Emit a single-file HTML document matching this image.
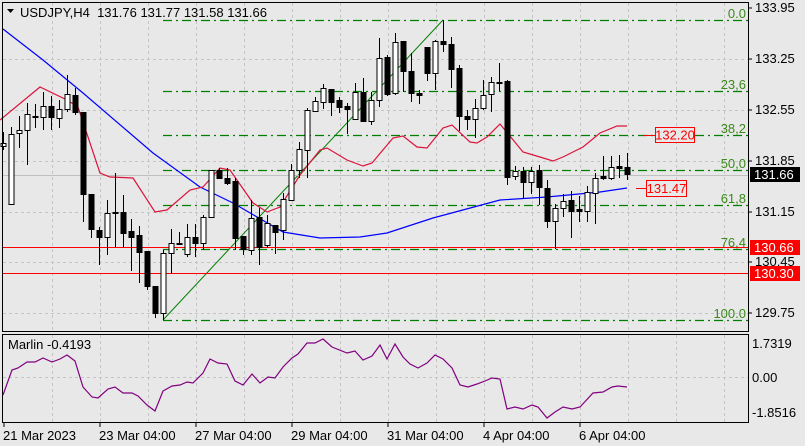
<!DOCTYPE html>
<html><head><meta charset="utf-8"><style>
html,body{margin:0;padding:0;background:#e8e8e8;}
svg{display:block;font-family:"Liberation Sans","DejaVu Sans",sans-serif;}
</style></head><body>
<svg id="s" width="805" height="446" viewBox="0 0 805 446" xmlns="http://www.w3.org/2000/svg">
<rect width="805" height="446" fill="#e8e8e8"/>
<g id="grid" stroke="#c4c4c4" stroke-dasharray="3 3" stroke-width="1"></g>
<g stroke="#007f00" stroke-dasharray="9 4 2 4" stroke-width="1.3" fill="none">
<line x1="163" y1="20.5" x2="748" y2="20.5"/>
<line x1="163" y1="91.5" x2="748" y2="91.5"/>
<line x1="163" y1="135.5" x2="748" y2="135.5"/>
<line x1="163" y1="170.5" x2="748" y2="170.5"/>
<line x1="163" y1="205.5" x2="748" y2="205.5"/>
<line x1="163" y1="249.5" x2="748" y2="249.5"/>
<line x1="163" y1="320.5" x2="748" y2="320.5"/>
</g>
<line x1="163" y1="320" x2="443" y2="20" stroke="#008000" stroke-width="1"/>
<g fill="#3a8a1a" font-size="13" text-anchor="end">
<text x="746" y="18">0.0</text>
<text x="746" y="89">23,6</text>
<text x="746" y="133">38,2</text>
<text x="746" y="168">50,0</text>
<text x="746" y="203">61,8</text>
<text x="746" y="247">76,4</text>
<text x="746" y="318">100.0</text>
</g>
<line x1="2" y1="175.5" x2="748" y2="175.5" stroke="#c0c0c0"/>
<line x1="2" y1="247.5" x2="748" y2="247.5" stroke="#ff0000"/>
<line x1="2" y1="273.5" x2="748" y2="273.5" stroke="#ff0000"/>
<polyline fill="none" stroke="#0000ff" stroke-width="1.2" points="3,29 43,60 83,93 153,153 200,187 233,203 283,232 320,238 360,237 387,233 433,218 500,200 547,197 600,192 627,188"/>
<polyline fill="none" stroke="#dc143c" stroke-width="1.2" points="0,120 40,87 67,100 78,107 100,173 110,177 133,178 155,212 167,210 190,190 203,187 220,168 230,170 253,203 267,212 280,207 300,175 320,150 327,148 347,160 363,166 372,163 393,138 403,136 417,147 427,148 443,128 452,125 470,142 477,143 487,137 500,124 523,152 540,157 553,161 563,157 583,147 600,133 617,126 627,126"/>
<g id="candles"></g>
<line x1="643" y1="135.5" x2="655" y2="135.5" stroke="#ff0000"/>
<rect x="655.5" y="127.5" width="39" height="15" fill="#e8e8e8" stroke="#ff0000"/>
<text x="675" y="139.5" fill="#ff0000" font-size="13" text-anchor="middle">132.20</text>
<line x1="636" y1="188.5" x2="646" y2="188.5" stroke="#ff0000"/>
<rect x="646.5" y="180.5" width="40" height="16" fill="#e8e8e8" stroke="#ff0000"/>
<text x="666.5" y="193" fill="#ff0000" font-size="13" text-anchor="middle">131.47</text>
<rect x="2.5" y="2.5" width="746" height="329" fill="none" stroke="#000"/>
<rect x="2.5" y="334.5" width="746" height="88" fill="none" stroke="#000"/>
<path d="M7,9 L14,9 L10.5,13 Z" fill="#000"/>
<text x="20" y="17" font-size="13" fill="#000">USDJPY,H4&#160; 131.76 131.77 131.58 131.66</text>
<g font-size="13" fill="#000">
<text x="755" y="12">133.95</text>
<text x="755" y="63">133.25</text>
<text x="755" y="114">132.55</text>
<text x="755" y="165">131.85</text>
<text x="755" y="216">131.15</text>
<text x="755" y="266">130.45</text>
<text x="755" y="317">129.75</text>
</g>
<g stroke="#000"><line x1="748" y1="8" x2="752" y2="8"/><line x1="748" y1="59" x2="752" y2="59"/><line x1="748" y1="110" x2="752" y2="110"/><line x1="748" y1="161" x2="752" y2="161"/><line x1="748" y1="212" x2="752" y2="212"/><line x1="748" y1="262" x2="752" y2="262"/><line x1="748" y1="313" x2="752" y2="313"/></g>
<rect x="750" y="167" width="50" height="15" fill="#000"/>
<text x="754" y="179" font-size="13" fill="#fff">131.66</text>
<rect x="750" y="240" width="50" height="15" fill="#ff0000"/>
<text x="754" y="252" font-size="13" fill="#fff">130.66</text>
<rect x="750" y="266" width="50" height="15" fill="#ff0000"/>
<text x="754" y="278" font-size="13" fill="#fff">130.30</text>
<text x="8" y="349" font-size="13" fill="#000">Marlin -0.4193</text>
<polyline fill="none" stroke="#800080" stroke-width="1.2" points="3,395 12,370 18,368 27,362 35,362 43,358 52,362 60,359 67,355 75,361 83,387 92,397 98,398 108,389 115,387 123,393 132,393 138,396 147,405 155,411 163,391 172,386 180,385 187,382 193,383 203,373 210,359 218,363 227,364 235,381 243,385 252,374 260,383 268,377 275,378 283,367 292,358 298,354 307,343 315,343 323,339 332,347 347,353 355,351 363,360 372,356 380,345 387,359 395,344 403,357 410,364 418,368 427,363 435,355 443,359 452,368 460,385 468,387 477,384 485,381 492,378 500,379 507,409 515,407 523,409 532,405 538,407 547,418 555,412 563,407 572,409 580,407 593,393 603,392 612,387 618,386 627,387"/>
<g font-size="13" fill="#000">
<text x="752" y="348">1.7319</text>
<text x="752" y="382">0.00</text>
<text x="752" y="417">-1.8516</text>
</g>
<g font-size="13" fill="#000">
<text x="3" y="440">21 Mar 2023</text>
<text x="99" y="440">23 Mar 04:00</text>
<text x="195" y="440">27 Mar 04:00</text>
<text x="291" y="440">29 Mar 04:00</text>
<text x="387" y="440">31 Mar 04:00</text>
<text x="483" y="440">4 Apr 04:00</text>
<text x="579" y="440">6 Apr 04:00</text>
</g>
<g stroke="#000"><line x1="4" y1="423" x2="4" y2="427"/><line x1="100" y1="423" x2="100" y2="427"/><line x1="196" y1="423" x2="196" y2="427"/><line x1="292" y1="423" x2="292" y2="427"/><line x1="388" y1="423" x2="388" y2="427"/><line x1="484" y1="423" x2="484" y2="427"/><line x1="580" y1="423" x2="580" y2="427"/></g>
</svg>
<script>
var NS="http://www.w3.org/2000/svg";
function el(p,t,a){var e=document.createElementNS(NS,t);for(var k in a)e.setAttribute(k,a[k]);p.appendChild(e);return e;}
var g=document.getElementById("grid");
for(var x=52;x<748;x+=48){el(g,"line",{x1:x+.5,y1:3,x2:x+.5,y2:331});el(g,"line",{x1:x+.5,y1:335,x2:x+.5,y2:422});}
[59,110,161,212,262,313].forEach(function(y){el(g,"line",{x1:3,y1:y+.5,x2:748,y2:y+.5});});
el(g,"line",{x1:3,y1:377.5,x2:748,y2:377.5});
var d=[[143,146,132,150,1],[134,204,127,204,1],[130,133,116,148,1],[114,130,103,165,1],[116,117,104,128,0],[106,117,92,130,1],[106,117,96,130,0],[109,118,100,128,1],[94,109,75,112,1],[95,112,88,115,0],[112,194,112,222,0],[194,229,194,238,0],[230,237,227,265,0],[213,237,200,255,1],[212,213,173,247,0],[212,233,195,247,0],[231,237,219,271,0],[235,252,226,283,0],[251,286,251,290,0],[286,313,286,318,0],[253,313,250,320,1],[243,253,229,274,1],[243,244,232,245,0],[237,254,224,257,1],[237,243,224,257,0],[217,243,215,250,1],[170,217,170,217,1],[170,178,168,178,0],[178,183,168,185,0],[181,238,178,250,0],[236,249,236,255,0],[218,250,200,255,1],[217,247,208,265,0],[223,245,215,248,1],[225,232,225,254,0],[199,230,193,240,1],[170,200,164,200,1],[149,170,142,178,1],[110,150,108,178,1],[101,111,97,111,1],[88,102,84,109,1],[89,102,89,116,0],[100,107,97,113,0],[106,109,103,134,0],[92,119,83,120,1],[92,121,78,121,0],[100,121,92,125,1],[58,100,38,107,1],[57,94,55,96,0],[42,93,33,95,1],[41,71,41,92,0],[71,93,53,102,0],[93,95,90,104,0],[47,73,47,81,0],[41,73,40,90,1],[41,44,20,52,0],[44,69,37,88,0],[68,116,65,131,0],[116,119,110,130,0],[108,119,99,138,1],[95,108,80,110,1],[82,94,77,112,1],[82,83,63,91,0],[81,177,80,185,0],[171,176,166,180,1],[171,182,167,199,0],[171,182,167,194,1],[170,187,165,205,0],[188,221,180,228,0],[208,221,204,249,1],[201,208,194,217,1],[200,211,191,238,0],[209,211,196,222,0],[192,211,186,222,1],[178,193,173,224,1],[176,178,156,180,0],[167,178,156,180,1],[166,168,155,178,0],[167,174,153,180,0]];
var c=document.getElementById("candles");
d.forEach(function(r,i){var x=3+8*i;
el(c,"line",{x1:x+.5,y1:r[2],x2:x+.5,y2:r[3],stroke:"#000","stroke-width":1});
var h=Math.max(r[1]-r[0],1);
el(c,"rect",{x:x-2,y:r[0]+.5,width:5,height:h,fill:r[4]?"#fff":"#000",stroke:"#000","stroke-width":1});});
</script>
</body></html>
